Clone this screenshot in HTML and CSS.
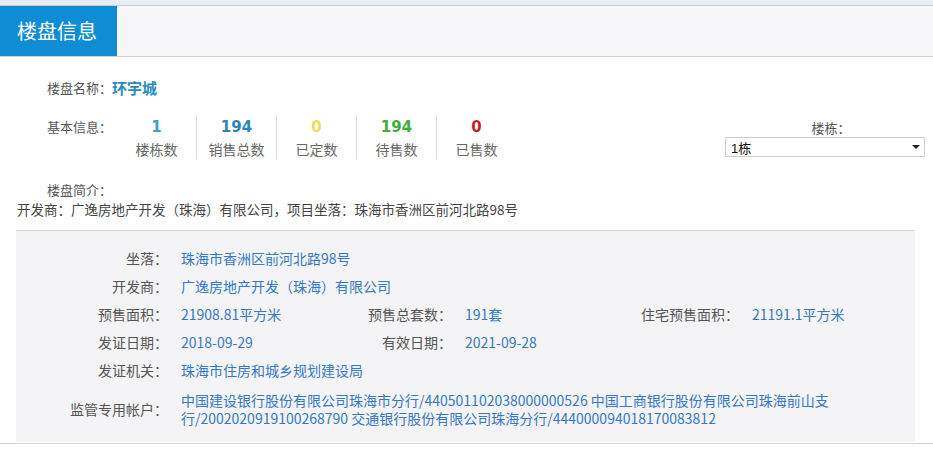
FILE: index.html
```html
<!DOCTYPE html>
<html lang="zh-CN">
<head>
<meta charset="utf-8">
<title>楼盘信息</title>
<link rel="stylesheet" href="styles.css">
</head>
<body>
<div class="topstrip"></div>
<div class="header">
  <div class="tab">楼盘信息</div>
</div>

<div class="info">
  <div class="row-name">
    <span class="lab">楼盘名称：</span><span class="name">环宇城</span>
  </div>

  <div class="row-stats">
    <div class="stats-left">
      <span class="lab stats-lab">基本信息：</span>
      <div class="stats">
        <div class="stat"><div class="num c1">1</div><div class="sl">楼栋数</div></div>
        <div class="stat"><div class="num c2">194</div><div class="sl">销售总数</div></div>
        <div class="stat"><div class="num c3">0</div><div class="sl">已定数</div></div>
        <div class="stat"><div class="num c4">194</div><div class="sl">待售数</div></div>
        <div class="stat last"><div class="num c5">0</div><div class="sl">已售数</div></div>
      </div>
    </div>
    <div class="building">
      <div class="building-lab">楼栋：</div>
      <div class="select"><span>1栋</span><span class="arrow"></span></div>
    </div>
  </div>

  <div class="row-intro"><span class="lab">楼盘简介：</span></div>
</div>
<div class="intro-text">开发商：广逸房地产开发（珠海）有限公司，项目坐落：珠海市香洲区前河北路98号</div>

<div class="detail">
  <div class="grid">
    <div class="dl">坐落：</div>
    <div class="dv span">珠海市香洲区前河北路98号</div>

    <div class="dl">开发商：</div>
    <div class="dv span">广逸房地产开发（珠海）有限公司</div>

    <div class="dl">预售面积：</div>
    <div class="dv">21908.81平方米</div>
    <div class="dl">预售总套数：</div>
    <div class="dv">191套</div>
    <div class="dl">住宅预售面积：</div>
    <div class="dv">21191.1平方米</div>

    <div class="dl">发证日期：</div>
    <div class="dv">2018-09-29</div>
    <div class="dl">有效日期：</div>
    <div class="dv span2">2021-09-28</div>

    <div class="dl">发证机关：</div>
    <div class="dv span">珠海市住房和城乡规划建设局</div>

    <div class="dl acc-lab">监管专用帐户：</div>
    <div class="dv span acc">中国建设银行股份有限公司珠海市分行/440501102038000000526 中国工商银行股份有限公司珠海前山支<br>行/2002020919100268790 交通银行股份有限公司珠海分行/444000094018170083812</div>
  </div>
</div>
<div class="bottom-line"></div>
</body>
</html>
```

FILE: styles.css
```css
html, body {
  margin: 0;
  padding: 0;
  background: #ffffff;
  font-family: "Noto Sans CJK TC", "Noto Sans CJK SC", "Noto Sans", sans-serif;
  color: #555;
}

.topstrip {
  height: 5px;
  background: #e7eef4;
}

.header {
  height: 50px;
  background: #f7f7f9;
  border-top: 1px solid #c9ccd0;
  border-bottom: 1px solid #d0d0d0;
  display: flex;
}

.tab {
  width: 100px;
  padding-left: 17px;
  background: #0e8dd4;
  color: #ffffff;
  font-size: 20px;
  line-height: 50px;
}

.info {
  padding-left: 47px;
}

.lab {
  font-size: 13px;
  color: #555;
}

.row-name {
  margin-top: 21px;
  height: 20px;
  line-height: 20px;
  display: flex;
  align-items: center;
}

.name {
  font-size: 15px;
  font-weight: bold;
  color: #2a8bbf;
}

.row-stats {
  margin-top: 15px;
  display: flex;
  justify-content: space-between;
  height: 47px;
}

.stats-left {
  display: flex;
  align-items: flex-start;
}

.stats-lab {
  width: 70px;
  line-height: 24px;
  padding-top: 2px;
}

.stats {
  display: flex;
}

.stat {
  width: 79px;
  border-right: 1px solid #dcdcdc;
  text-align: center;
  height: 44px;
  margin-top: 2px;
}

.stat.last {
  border-right: none;
}

.num {
  font-family: "DejaVu Sans", "Liberation Sans", sans-serif;
  font-weight: bold;
  font-size: 15px;
  line-height: 22px;
  margin-top: 1px;
}

.sl {
  font-size: 14px;
  line-height: 22px;
  color: #666;
}

.c1 { color: #3b9dc9; }
.c2 { color: #2a86b8; }
.c3 { color: #e6df5a; }
.c4 { color: #3dae3f; }
.c5 { color: #bf1f2c; }

.building {
  width: 200px;
  margin-right: 8px;
  padding-top: 6px;
}

.building-lab {
  text-align: center;
  font-size: 13px;
  line-height: 18px;
  color: #555;
  padding-left: 12px;
}

.select {
  height: 18px;
  border: 1px solid #cfcfcf;
  background: #fff;
  display: flex;
  align-items: center;
  justify-content: space-between;
  padding: 0 4px 0 5px;
  font-family: "Liberation Sans", "Noto Sans CJK SC", sans-serif;
  font-size: 13px;
  color: #111;
}

.arrow {
  width: 0;
  height: 0;
  border-left: 4px solid transparent;
  border-right: 4px solid transparent;
  border-top: 4px solid #222;
}

.row-intro {
  margin-top: 18px;
  line-height: 20px;
  height: 20px;
}

.intro-text {
  padding-left: 17px;
  font-size: 13.5px;
  line-height: 22px;
  color: #444;
}

.detail {
  margin: 10px 18px 0 16px;
  background: #f4f3f6;
  border-top: 1px solid #d6d6da;
  padding: 13px 0 15px 0;
}

.grid {
  display: grid;
  grid-template-columns: 152px 172px 112px 174px 113px 1fr;
  grid-auto-rows: minmax(28px, auto);
  font-size: 14px;
  align-items: center;
}

.dl {
  text-align: right;
  color: #555;
  white-space: nowrap;
}

.dv {
  padding-left: 13px;
  color: #3579be;
  white-space: nowrap;
}

.dv.span {
  grid-column: 2 / -1;
}

.dv.span2 {
  grid-column: 4 / -1;
}

.acc-lab {
  margin-top: 7px;
}

.acc {
  line-height: 18px;
  margin-top: 7px;
  white-space: normal;
}

.bottom-line {
  margin-top: 1px;
  height: 1px;
  background: #d2d2d2;
}
```
